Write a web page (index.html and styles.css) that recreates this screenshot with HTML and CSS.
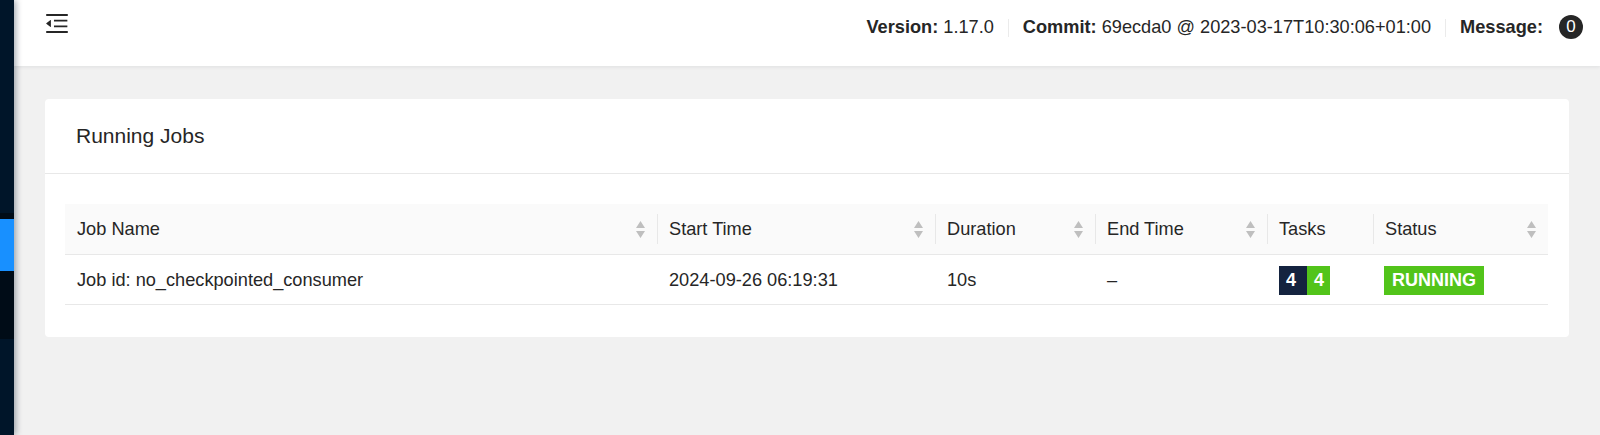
FILE: index.html
```html
<!DOCTYPE html>
<html lang="en">
<head>
<meta charset="utf-8">
<title>Apache Flink Web Dashboard</title>
<link rel="stylesheet" href="styles.css">
</head>
<body>
<div class="layout">
  <aside class="sider">
    <div class="menu-top"></div>
    <div class="submenu">
      <div class="submenu-gap"></div>
      <div class="item-active"></div>
    </div>
  </aside>
  <div class="main">
    <header class="header">
      <svg class="fold" viewBox="112 160 800 704" aria-hidden="true">
        <path fill="#262626" d="M408 442h480c4.4 0 8-3.6 8-8v-56c0-4.4-3.6-8-8-8H408c-4.4 0-8 3.6-8 8v56c0 4.4 3.6 8 8 8zm-8 204c0 4.4 3.6 8 8 8h480c4.4 0 8-3.6 8-8v-56c0-4.4-3.6-8-8-8H408c-4.4 0-8 3.6-8 8v56zm504-486H120c-4.4 0-8 3.6-8 8v56c0 4.4 3.6 8 8 8h784c4.4 0 8-3.6 8-8v-56c0-4.4-3.6-8-8-8zm0 632H120c-4.4 0-8 3.6-8 8v56c0 4.4 3.6 8 8 8h784c4.4 0 8-3.6 8-8v-56c0-4.4-3.6-8-8-8zM115.4 518.9L271.7 642c5.8 4.6 14.4.5 14.4-6.9V388.9c0-7.4-8.5-11.5-14.4-6.9L115.4 505.1a8.75 8.75 0 000 13.8z"/>
      </svg>
      <div class="header-info">
        <span class="info"><b>Version:</b> 1.17.0</span>
        <span class="divider"></span>
        <span class="info"><b>Commit:</b> 69ecda0 @ 2023-03-17T10:30:06+01:00</span>
        <span class="divider"></span>
        <span class="info"><b>Message:</b></span>
        <span class="count">0</span>
      </div>
    </header>
    <main class="content">
      <section class="card">
        <div class="card-head">Running Jobs</div>
        <div class="card-body">
          <table class="jobs">
            <colgroup>
              <col class="c-name"><col class="c-start"><col class="c-dur"><col class="c-end"><col class="c-tasks"><col class="c-status">
            </colgroup>
            <thead>
              <tr>
                <th class="first"><div class="th-inner"><span>Job Name</span><svg class="sorter" viewBox="0 0 9 17"><path d="M0 7L4.5 0L9 7Z M0 10H9L4.5 17Z"/></svg></div></th>
                <th><div class="th-inner"><span>Start Time</span><svg class="sorter" viewBox="0 0 9 17"><path d="M0 7L4.5 0L9 7Z M0 10H9L4.5 17Z"/></svg></div></th>
                <th><div class="th-inner"><span>Duration</span><svg class="sorter" viewBox="0 0 9 17"><path d="M0 7L4.5 0L9 7Z M0 10H9L4.5 17Z"/></svg></div></th>
                <th><div class="th-inner"><span>End Time</span><svg class="sorter" viewBox="0 0 9 17"><path d="M0 7L4.5 0L9 7Z M0 10H9L4.5 17Z"/></svg></div></th>
                <th><div class="th-inner"><span>Tasks</span></div></th>
                <th><div class="th-inner"><span>Status</span><svg class="sorter" viewBox="0 0 9 17"><path d="M0 7L4.5 0L9 7Z M0 10H9L4.5 17Z"/></svg></div></th>
              </tr>
            </thead>
            <tbody>
              <tr>
                <td>Job id: no_checkpointed_consumer</td>
                <td>2024-09-26 06:19:31</td>
                <td>10s</td>
                <td>–</td>
                <td><div class="cell-flex"><span class="t-total">4</span><span class="t-running">4</span></div></td>
                <td><div class="cell-flex"><span class="status-tag">RUNNING</span></div></td>
              </tr>
            </tbody>
          </table>
        </div>
      </section>
    </main>
  </div>
</div>
</body>
</html>
```

FILE: styles.css
```css
* { box-sizing: border-box; }

html, body {
  margin: 0;
  padding: 0;
  height: 100%;
}

body {
  font-family: "Liberation Sans", Arial, Helvetica, sans-serif;
  color: #262626;
  background: #f1f1f1;
  overflow: hidden;
}

.layout {
  display: flex;
  height: 100vh;
}

.sider {
  width: 14px;
  flex: 0 0 14px;
  background: #001529;
  box-shadow: 2px 0 6px rgba(0, 21, 41, 0.35);
  position: relative;
  z-index: 2;
  display: flex;
  flex-direction: column;
}

.menu-top {
  height: 213px;
}

.submenu {
  height: 126px;
  background: #000c17;
  display: flex;
  flex-direction: column;
}

.submenu-gap {
  height: 6px;
}

.item-active {
  height: 52px;
  background: #1890ff;
}

.main {
  flex: 1;
  display: flex;
  flex-direction: column;
  min-width: 0;
}

.header {
  height: 66px;
  flex: 0 0 66px;
  background: #fff;
  box-shadow: 0 1px 4px rgba(0, 21, 41, 0.08);
  position: relative;
  z-index: 1;
  display: flex;
  justify-content: space-between;
  align-items: flex-start;
  padding: 0 17px 0 32px;
}

.fold {
  width: 22px;
  height: 19px;
  margin-top: 14px;
}

.header-info {
  display: flex;
  align-items: flex-start;
  font-size: 18.2px;
  line-height: 49px;
  padding-top: 3px;
  white-space: nowrap;
}

.header-info b {
  font-weight: 700;
}

.divider {
  width: 1px;
  height: 18px;
  background: #ebebeb;
  margin: 16px 14px 0;
}

.count {
  margin: 12px 0 0 16px;
  min-width: 24px;
  height: 24px;
  border-radius: 12px;
  background: #262626;
  color: #fff;
  font-size: 17px;
  line-height: 24px;
  text-align: center;
}

.content {
  padding: 33px 31px;
}

.card {
  background: #fff;
  border-radius: 4px;
}

.card-head {
  height: 75px;
  padding: 0 31px;
  display: flex;
  align-items: center;
  border-bottom: 1px solid #e8e8e8;
  font-size: 21px;
  color: #262626;
}

.card-body {
  padding: 30px 21px 32px 20px;
}

.jobs {
  width: 1483px;
  border-collapse: separate;
  border-spacing: 0;
  table-layout: fixed;
  font-size: 18.2px;
  color: #262626;
}

.c-name { width: 592px; }
.c-start { width: 278px; }
.c-dur { width: 160px; }
.c-end { width: 172px; }
.c-tasks { width: 106px; }
.c-status { width: 175px; }

.jobs th {
  height: 51px;
  padding: 1px 12px 0;
  text-align: left;
  font-weight: 400;
  background: linear-gradient(#e8e8e8, #e8e8e8) no-repeat 0 50% / 1px 30px, #fafafa;
  border-bottom: 1px solid #e8e8e8;
}

.jobs th.first {
  background: #fafafa;
}

.th-inner {
  display: flex;
  justify-content: space-between;
  align-items: center;
}

.sorter {
  width: 9px;
  height: 17px;
  fill: #bfbfbf;
  flex: 0 0 9px;
}

.jobs td {
  height: 50px;
  padding: 1px 12px 0;
  border-bottom: 1px solid #e8e8e8;
  white-space: nowrap;
}

.cell-flex {
  display: flex;
  align-items: center;
}

.t-total,
.t-running {
  height: 29px;
  line-height: 29px;
  color: #fff;
  font-weight: 700;
  font-size: 18px;
}

.t-total {
  background: #14233f;
  padding: 0 11px 0 7px;
}

.t-running {
  background: #52c41a;
  padding: 0 6px 0 7px;
}

.status-tag {
  display: inline-block;
  height: 29px;
  line-height: 27px;
  padding: 0 7px;
  background: #52c41a;
  border: 1px solid #52c41a;
  color: #fff;
  font-weight: 700;
  font-size: 18px;
  margin-left: -1px;
}
```
